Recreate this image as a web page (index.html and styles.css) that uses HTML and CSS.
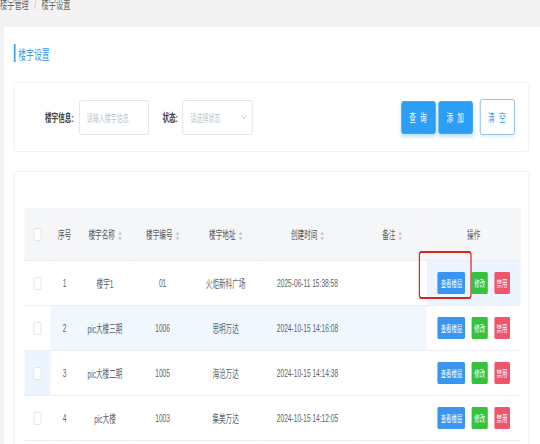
FILE: index.html
```html
<!DOCTYPE html>
<html lang="zh">
<head>
<meta charset="utf-8">
<title>楼宇设置</title>
<link rel="stylesheet" href="styles.css">
</head>
<body>
<div class="page">
  <div class="breadcrumb"><span class="crumb">楼宇管理</span><span class="sep">/</span><span class="crumb">楼宇设置</span></div>
  <div class="panel">
    <div class="title"><span class="bar"></span><span class="title-text">楼宇设置</span></div>

    <div class="card search">
      <label class="label">楼宇信息:</label>
      <div class="input"><span class="ph">请输入楼宇信息</span></div>
      <label class="label label-state">状态:</label>
      <div class="input select"><span class="ph">请选择状态</span>
        <svg class="chev" viewBox="0 0 10 6" width="10" height="6"><path d="M1 1 L5 5 L9 1" fill="none" stroke="#c0c4cc" stroke-width="1"/></svg>
      </div>
      <div class="actions">
        <button class="btn btn-primary">查 询</button>
        <button class="btn btn-primary">添 加</button>
        <button class="btn btn-plain">清 空</button>
      </div>
    </div>

    <div class="card table-card">
      <table class="grid">
        <colgroup>
          <col class="c-check"><col class="c-seq"><col class="c-name"><col class="c-code"><col class="c-addr"><col class="c-time"><col class="c-note"><col class="c-op">
        </colgroup>
        <thead>
          <tr>
            <th><span class="cb"></span></th>
            <th>序号</th>
            <th>楼宇名称<span class="sort"></span></th>
            <th>楼宇编号<span class="sort"></span></th>
            <th>楼宇地址<span class="sort"></span></th>
            <th>创建时间<span class="sort"></span></th>
            <th>备注<span class="sort"></span></th>
            <th>操作</th>
          </tr>
        </thead>
        <tbody>
          <tr>
            <td><span class="cb"></span></td>
            <td>1</td>
            <td>楼宇1</td>
            <td>01</td>
            <td>火炬新科广场</td>
            <td>2025-06-11 15:38:58</td>
            <td></td>
            <td class="op hl"><span class="mark"></span><button class="sm sm-blue">查看楼层</button><button class="sm sm-green">修改</button><button class="sm sm-red">禁用</button></td>
          </tr>
          <tr class="row-hl">
            <td class="plain"><span class="cb"></span></td>
            <td>2</td>
            <td>pic大楼三期</td>
            <td>1006</td>
            <td>思明万达</td>
            <td>2024-10-15 14:16:08</td>
            <td></td>
            <td class="op plain"><button class="sm sm-blue">查看楼层</button><button class="sm sm-green">修改</button><button class="sm sm-red">禁用</button></td>
          </tr>
          <tr>
            <td class="hl"><span class="cb"></span></td>
            <td>3</td>
            <td>pic大楼二期</td>
            <td>1005</td>
            <td>海沧万达</td>
            <td>2024-10-15 14:14:38</td>
            <td></td>
            <td class="op"><button class="sm sm-blue">查看楼层</button><button class="sm sm-green">修改</button><button class="sm sm-red">禁用</button></td>
          </tr>
          <tr>
            <td><span class="cb"></span></td>
            <td>4</td>
            <td>pic大楼</td>
            <td>1003</td>
            <td>集美万达</td>
            <td>2024-10-15 14:12:05</td>
            <td></td>
            <td class="op"><button class="sm sm-blue">查看楼层</button><button class="sm sm-green">修改</button><button class="sm sm-red">禁用</button></td>
          </tr>
        </tbody>
      </table>
    </div>
  </div>
</div>
</body>
</html>
```

FILE: styles.css
```css
html, body {
  margin: 0;
  padding: 0;
  overflow: hidden;
  background: #f3f3f3;
}
body {
  font-family: "Liberation Sans", "Noto Sans CJK SC", sans-serif;
  color: #606266;
}
.page {
  width: 900px;
  transform: scaleX(0.6);
  transform-origin: 0 0;
}
.breadcrumb {
  height: 26px;
  font-size: 12px;
  line-height: 12px;
  margin-top: -1px;
  color: #666;
  box-sizing: border-box;
}
.breadcrumb .sep {
  color: #bbb;
  margin: 0 9px;
}
.panel {
  background: #fff;
  margin-left: 7px;
  margin-top: 2px;
  padding: 17px 18px 20px 16px;
  min-height: 380px;
}
.title {
  display: flex;
  align-items: center;
  height: 18px;
}
.bar {
  width: 2.5px;
  height: 18px;
  background: #4aa3e8;
}
.title-text {
  margin-left: 5px;
  font-size: 13px;
  color: #3d9be6;
}
.card {
  border: 1px solid #ebeef5;
  border-radius: 3px;
  background: #fff;
}
.search {
  margin-top: 20px;
  height: 68px;
  display: flex;
  align-items: center;
  padding: 0 23px 0 51px;
}
.label {
  font-size: 11px;
  font-weight: bold;
  color: #444;
  margin-right: 9px;
}
.label-state {
  margin-left: 23px;
  margin-right: 8px;
}
.input {
  width: 116px;
  height: 35px;
  box-sizing: border-box;
  border: 1px solid #dcdfe6;
  border-radius: 3px;
  display: flex;
  align-items: center;
  padding: 0 12px;
}
.select {
  width: 117px;
  justify-content: space-between;
  padding-right: 8px;
}
.ph {
  font-size: 10px;
  color: #c0c4cc;
}
.chev {
  width: 10px;
  height: 6px;
}
.actions {
  margin-left: auto;
  display: flex;
  align-items: center;
}
.btn {
  font-family: inherit;
  font-size: 11px;
  letter-spacing: 2px;
  height: 33px;
  width: 57px;
  border-radius: 3px;
  border: 1px solid #2d9ef5;
  cursor: pointer;
}
.btn-primary {
  background: #2d9ef5;
  color: #fff;
  margin-right: 5px;
  box-shadow: 0 3px 5px rgba(45, 158, 245, 0.3);
}
.btn-plain {
  margin-left: 7px;
  background: #fff;
  color: #3b97e0;
  border-color: #7fb8e6;
  height: 36px;
  width: 58px;
  box-shadow: 0 2px 4px rgba(45, 158, 245, 0.15);
}
.table-card {
  margin-top: 19px;
  padding: 36px 15px 20px 17px;
}
.grid {
  width: 827px;
  table-layout: fixed;
  border-collapse: collapse;
  font-size: 11px;
}
.c-check { width: 43px; }
.c-seq { width: 47px; }
.c-name { width: 88px; }
.c-code { width: 104px; }
.c-addr { width: 106px; }
.c-time { width: 167px; }
.c-note { width: 115px; }
.c-op { width: 157px; }
.grid th {
  height: 52px;
  background: #f5f6f8;
  font-weight: normal;
  color: #555;
  text-align: center;
  padding: 0;
  border-bottom: 1px solid #ebeef5;
}
.grid td {
  height: 44px;
  text-align: center;
  padding: 0;
  border-bottom: 1px solid #ebeef5;
  color: #606266;
  white-space: nowrap;
}
.cb {
  display: inline-block;
  width: 11px;
  height: 11px;
  border: 1px solid #dcdfe6;
  border-radius: 2px;
  background: #fff;
  vertical-align: middle;
}
.sort {
  display: inline-block;
  vertical-align: middle;
  width: 6px;
  height: 10px;
  margin-left: 5px;
  position: relative;
}
.sort::before, .sort::after {
  content: "";
  position: absolute;
  left: 0;
  border-left: 3px solid transparent;
  border-right: 3px solid transparent;
}
.sort::before {
  top: 0;
  border-bottom: 4px solid #c8ccd3;
}
.sort::after {
  bottom: 0;
  border-top: 4px solid #c8ccd3;
}
.row-hl td {
  background: #f0f7ff;
}
.row-hl td.plain {
  background: #fff;
}
.grid td.hl {
  background: #ecf5ff;
}
.op {
  position: relative;
}
.sm {
  font-family: inherit;
  font-size: 9px;
  height: 22px;
  color: #fff;
  border: none;
  border-radius: 2px;
  padding: 0 5px;
  vertical-align: middle;
}
.sm + .sm {
  margin-left: 11px;
}
.sm-blue { background: #3a95f0; }
.sm-green { background: #36c23c; padding: 0 4px; }
.sm-red { background: #f0566b; padding: 0 4px; margin-left: 10px; }
.mark {
  position: absolute;
  left: -13px;
  top: -10px;
  width: 84px;
  height: 44px;
  border: 2px solid #d9261c;
  border-radius: 4px;
}
```
